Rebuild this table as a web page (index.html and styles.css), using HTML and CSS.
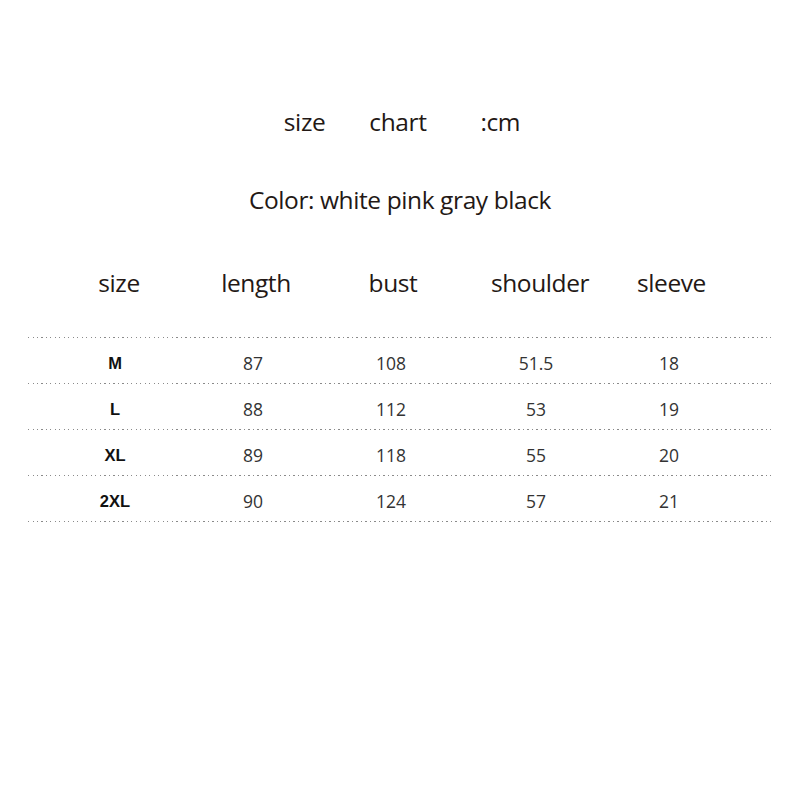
FILE: index.html
```html
<!DOCTYPE html>
<html>
<head>
<meta charset="utf-8">
<link rel="stylesheet" href="styles.css">
</head>
<body>
<div class="page">
  <div class="title"><span>size</span><span>chart</span><span>:cm</span></div>
  <div class="color">Color: white pink gray black</div>
  <div class="head">
    <span>size</span><span>length</span><span>bust</span><span>shoulder</span><span>sleeve</span>
  </div>
  <div class="table">
    <div class="row"><span class="sz">M</span><span>87</span><span>108</span><span>51.5</span><span>18</span></div>
    <div class="row"><span class="sz">L</span><span>88</span><span>112</span><span>53</span><span>19</span></div>
    <div class="row"><span class="sz">XL</span><span>89</span><span>118</span><span>55</span><span>20</span></div>
    <div class="row"><span class="sz">2XL</span><span>90</span><span>124</span><span>57</span><span>21</span></div>
  </div>
</div>
</body>
</html>
```

FILE: styles.css
```css
html, body {
  margin: 0;
  padding: 0;
  background: #fff;
}
.page {
  width: 800px;
  height: 800px;
  padding-top: 106px;
  box-sizing: border-box;
  color: #231815;
  font-family: "Open Sans", "Noto Sans", sans-serif;
}
.title {
  display: flex;
  justify-content: center;
  gap: 44px;
  padding-left: 4px;
  font-size: 24.5px;
  line-height: 32px;
  letter-spacing: -0.4px;
}
.title span:nth-child(3) { margin-left: 10px; }
.color {
  margin-top: 46px;
  text-align: center;
  font-size: 24.5px;
  line-height: 32px;
  letter-spacing: -0.4px;
}
.head {
  margin-top: 51px;
  display: grid;
  grid-template-columns: 138px 138px 138px 152px 114px;
  padding-left: 50px;
  font-size: 24.5px;
  line-height: 32px;
  letter-spacing: -0.4px;
}
.head span { text-align: center; }
.head span:nth-child(2) { margin-left: -2px; }
.head span:nth-child(3) { margin-left: -4px; }
.head span:nth-child(5) { margin-left: -3px; }
.table {
  margin: 38px 28px 0 28px;
  background-image: repeating-linear-gradient(to right, #8a8a8a 0 1px, transparent 1px 4.5px);
  background-size: 100% 1px;
  background-repeat: no-repeat;
  background-position: top left;
  padding-top: 1px;
}
.row {
  display: grid;
  grid-template-columns: 138px 138px 138px 152px 114px;
  padding-left: 18px;
  padding-top: 4px;
  height: 46px;
  box-sizing: border-box;
  align-items: center;
  background-image: repeating-linear-gradient(to right, #8a8a8a 0 1px, transparent 1px 4.5px);
  background-size: 100% 1px;
  background-repeat: no-repeat;
  background-position: bottom left;
  font-size: 17.5px;
  color: #333;
  font-family: "Open Sans", "Noto Sans", sans-serif;
}
.row span { text-align: center; }
.row .sz {
  font-family: "Liberation Sans", Arial, sans-serif;
  font-weight: bold;
  font-size: 16.5px;
  color: #111;
}
```
